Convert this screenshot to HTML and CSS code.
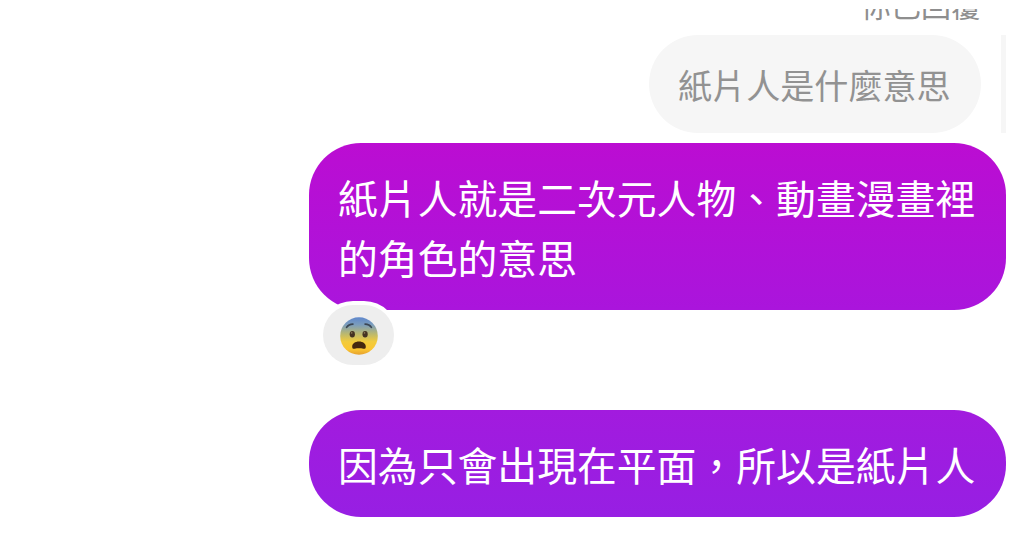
FILE: index.html
```html
<!DOCTYPE html>
<html lang="zh-Hant">
<head>
    <meta charset="UTF-8">
    <meta name="viewport" content="width=device-width, initial-scale=1.0">
    <title>Chat</title>
    <link rel="stylesheet" href="styles.css">
</head>
<body>
    <div class="chat">
        <div class="reply-label"><span>你已回覆</span></div>
        <div class="quote">
            <div class="quote-bubble">紙片人是什麼意思</div>
            <div class="quote-bar"></div>
        </div>
        <div class="message message-first">
            紙片人就是二次元人物、動畫漫畫裡的角色的意思
            <div class="reaction">
                <svg class="emoji" viewBox="0 0 40 40" role="img" aria-label="fearful face">
                    <defs>
                        <linearGradient id="face" x1="0" y1="0" x2="0" y2="1">
                            <stop offset="0" stop-color="#5e86cc"/>
                            <stop offset="0.2" stop-color="#7b9dbc"/>
                            <stop offset="0.45" stop-color="#bdb96d"/>
                            <stop offset="0.65" stop-color="#f2cb3c"/>
                            <stop offset="0.85" stop-color="#fbc631"/>
                            <stop offset="1" stop-color="#e5a02f"/>
                        </linearGradient>
                    </defs>
                    <circle cx="20" cy="20" r="18.8" fill="url(#face)"/>
                    <path d="M7.6 11.4c1.3-2.1 3.5-3.3 6.3-3.3M26.1 8.1c2.8 0 5 1.2 6.3 3.3" fill="none" stroke="#3b4654" stroke-width="1.7" stroke-linecap="round"/>
                    <ellipse cx="13.3" cy="18.3" rx="2.6" ry="3.3" fill="#443223"/>
                    <ellipse cx="26.1" cy="18.3" rx="2.6" ry="3.3" fill="#443223"/>
                    <circle cx="12.7" cy="16.9" r="0.8" fill="#8d7b57"/>
                    <circle cx="25.5" cy="16.9" r="0.8" fill="#8d7b57"/>
                    <path d="M20 25.6c4.1 0 6.8 2.2 6.8 5.1 0 1.7-1 2.4-2.5 2.1-2.8-.6-5.8-.6-8.6 0-1.5.3-2.5-.4-2.5-2.1 0-2.9 2.7-5.1 6.8-5.1z" fill="#45270f"/>
                </svg>
            </div>
        </div>
        <div class="message message-second">因為只會出現在平面，所以是紙片人</div>
    </div>
</body>
</html>
```
FILE: styles.css
```css
html, body {
    margin: 0;
    height: 100%;
    overflow: hidden;
    background-color: #fff;
    font-family: "Noto Sans CJK TC", sans-serif;
}
.chat {
    display: flex;
    flex-direction: column;
    align-items: flex-end;
    height: 541px;
    padding: 9px 18px 0 0;
    box-sizing: border-box;
}
/* only the lower part of the label is scrolled into view */
.reply-label {
    display: flex;
    align-items: flex-end;
    height: 16px;
    margin-right: 25px;
    overflow: hidden;
    font-size: 30px;
    line-height: 42px;
    color: #8e8e8e;
}
.quote {
    display: flex;
    gap: 20px;
    margin-top: 10px;
}
.quote-bubble {
    width: 332px;
    height: 98px;
    padding-left: 29px;
    border-radius: 49px;
    box-sizing: border-box;
    background-color: #f6f6f6;
    color: #929292;
    font-size: 34.1px;
    line-height: 99px;
    white-space: nowrap;
}
.quote-bar {
    width: 5px;
    background-color: #f6f6f6;
}
.message {
    position: relative;
    width: 697px;
    padding: 24px 28px 23px 29px;
    border-radius: 52px;
    box-sizing: border-box;
    color: #fff;
    font-size: 39.85px;
    line-height: 60px;
}
.message-first {
    margin-top: 10px;
    background: linear-gradient(to bottom, #bb0dd2, #aa15dc);
}
.message-second {
    margin-top: 100px;
    background: linear-gradient(to bottom, #a21bde, #971fe3);
}
.reaction {
    position: absolute;
    left: 14px;
    bottom: -55px;
    display: flex;
    align-items: center;
    justify-content: center;
    width: 71px;
    height: 60px;
    padding-top: 1px;
    border-radius: 30px;
    box-sizing: border-box;
    background-color: #eee;
    box-shadow: 0 0 0 4px #fff;
}
.emoji {
    width: 40px;
    height: 40px;
}
```
